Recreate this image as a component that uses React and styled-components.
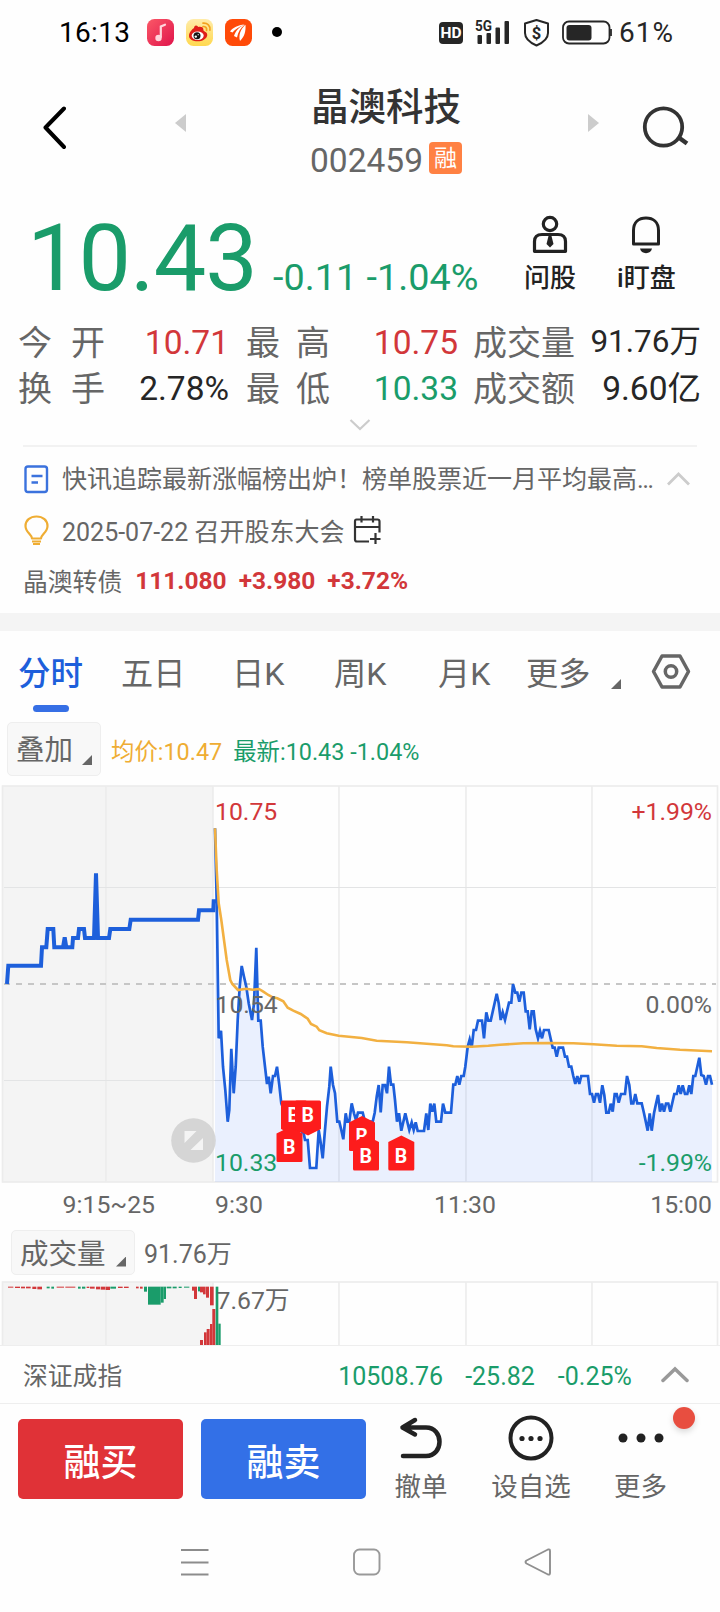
import React from 'react';
import styled, { createGlobalStyle } from 'styled-components';

const RED = '#d2373a';
const GREEN = '#1a9c6a';
const BLUE = '#1d5fdb';
const GRAY = '#666';
const DARK = '#262626';

const GlobalStyle = createGlobalStyle`
  * {
    box-sizing: border-box;
  }
  body {
    margin: 0;
    background: #fefefe;
    font-family: Roboto, 'Noto Sans CJK SC', sans-serif;
  }
  svg {
    display: block;
    flex-shrink: 0;
  }
`;

const Page = styled.div`
  width: 720px;
  height: 1612px;
  overflow: hidden;
  color: ${DARK};
`;

/* status bar */

const StatusBar = styled.div`
  display: flex;
  align-items: center;
  height: 65px;
  padding-left: 59px;
`;

const StatusText = styled.span`
  width: ${(p) => p.$width}px;
  font-size: 28px;
  line-height: 32px;
  letter-spacing: ${(p) => p.$spacing || 0.3}px;
  color: ${(p) => p.$color || '#000'};
  white-space: nowrap;
`;

const AppIcons = styled.div`
  display: flex;
  gap: 12px;
  flex: 1;
`;

const SystemIcons = styled.div`
  display: flex;
  align-items: center;
  margin-right: 7px;
`;

const HdTag = styled.span`
  width: 24px;
  height: 22px;
  margin: 1px 9px 0 0;
  border-radius: 4px;
  background: ${DARK};
  color: #fff;
  font-size: 15.5px;
  font-weight: 700;
  line-height: 22px;
  text-align: center;
`;

/* title */

const Header = styled.div`
  display: flex;
  align-items: flex-start;
  height: 117px;
  padding: 19px 31px 0 42px;
`;

const Back = styled.svg`
  margin-top: 21px;
`;

const SwitchArrow = styled.svg`
  margin: 30px 0 0 ${(p) => p.$left || 0}px;
`;

const SearchIcon = styled.svg`
  margin: 20px 0 0 42px;
`;

const TitleBlock = styled.div`
  flex: 1;
  display: flex;
  flex-direction: column;
  align-items: center;
  padding-right: 2px;
`;

const StockName = styled.div`
  font-size: 37.5px;
  font-weight: 500;
  line-height: 46px;
  color: #333;
`;

const StockCode = styled.div`
  display: flex;
  align-items: center;
  gap: 6px;
  height: 44px;
  margin-top: 9px;
  font-size: 33.5px;
  line-height: 44px;
  color: ${GRAY};
`;

const MarginTag = styled.span`
  width: 33px;
  height: 32px;
  margin-top: -6px;
  border-radius: 4px;
  background: #ff8143;
  color: #fff;
  font-size: 23px;
  line-height: 34px;
  text-align: center;
`;

/* quote */

const Quote = styled.div`
  display: flex;
  height: 138px;
  padding: 26px 0 0 27px;
`;

const Price = styled.div`
  display: flex;
  align-items: baseline;
  width: 497px;
  color: ${GREEN};
  line-height: 100px;
`;

const PriceValue = styled.span`
  width: 246px;
  font-size: 93.5px;
  letter-spacing: -1px;
`;

const PriceChange = styled.span`
  font-size: 37.8px;
  white-space: nowrap;
`;

const QuoteAction = styled.div`
  display: flex;
  flex-direction: column;
  align-items: center;
  margin-top: 6px;
  margin-right: 41px;
  font-size: 26px;
  font-weight: 500;
  line-height: 30px;
  color: #222;
  white-space: nowrap;

  span {
    margin-top: 9px;
  }
`;

const Stats = styled.div`
  display: grid;
  grid-template-columns: 87px 124px 17px 84px 128px 15px 104px 1fr;
  grid-auto-rows: 46px;
  padding: 0 19px 0 18px;
  font-size: 33.5px;
  line-height: 46px;
`;

const StatLabel = styled.div`
  display: flex;
  justify-content: space-between;
  font-size: 34px;
  color: ${GRAY};
  white-space: nowrap;
`;

const StatValue = styled.div`
  text-align: right;
  font-size: ${(p) => p.$size || 33.5}px;
  line-height: ${(p) => (p.$size ? 44 : 46)}px;
  color: ${(p) => p.$color || DARK};
  white-space: nowrap;
`;

const ExpandRow = styled.div`
  display: flex;
  justify-content: center;
  height: 35px;
  margin: 0 23px;
  padding-top: 7px;
  border-bottom: 2px solid #f2f2f2;
`;

/* news */

const News = styled.div`
  height: 166px;
  padding: 6px 24px 0;
  font-size: 25px;
  color: ${GRAY};
`;

const NewsRow = styled.div`
  display: flex;
  align-items: center;
  height: 51px;
  white-space: nowrap;
`;

const NewsText = styled.span`
  margin: ${(p) => p.$top || 0}px ${(p) => p.$right || 0}px 0 13px;
`;

const BondName = styled.span`
  margin: -2px 0 0 -1px;
  font-size: 24.8px;
`;

const Bond = styled.span`
  margin-left: ${(p) => p.$left || 12}px;
  font-size: 24.5px;
  font-weight: 700;
  color: ${RED};
`;

const Band = styled.div`
  height: 18px;
  background: #f4f4f4;
`;

/* tabs */

const Tabs = styled.div`
  display: grid;
  grid-template-columns: 103px 111px 102px 104px 88px 85px 40px 1fr;
  justify-items: start;
  height: 91px;
  padding: 23px 0 0 18px;
`;

const Tab = styled.div`
  display: flex;
  flex-direction: column;
  align-items: center;
  font-size: ${(p) => (p.$active ? 32.5 : 32.2)}px;
  font-weight: ${(p) => (p.$active ? 500 : 400)};
  line-height: 40px;
  color: ${(p) => (p.$active ? BLUE : GRAY)};

  &::after {
    content: '';
    width: 36px;
    height: 7px;
    margin-top: 11px;
    border-radius: 4px;
    background: ${(p) => (p.$active ? '#366fe5' : 'transparent')};
  }
`;

const Corner = styled.i`
  width: 10px;
  height: 10px;
  margin-top: ${(p) => p.$top || 0}px;
  background: ${GRAY};
  clip-path: polygon(100% 0, 100% 100%, 0 100%);
`;

const Toolbar = styled.div`
  display: flex;
  height: 58px;
  padding-left: 7px;
  font-size: 23.4px;
  line-height: 60px;
  white-space: nowrap;
`;

const Picker = styled.div`
  display: flex;
  justify-content: space-between;
  align-items: center;
  width: ${(p) => p.$width}px;
  height: ${(p) => p.$height}px;
  padding: 4px 8px 0 8px;
  border: 1px solid #eee;
  border-radius: 5px;
  background: #f8f8f8;
  color: ${GRAY};
  font-size: 28.5px;
  line-height: 40px;
`;

const Legend = styled.span`
  margin-left: ${(p) => p.$left}px;
  color: ${(p) => p.$color};
`;

const VolumeBar = styled.div`
  display: flex;
  height: 55px;
  padding: 5px 0 0 11px;
`;

const VolumeValue = styled.span`
  margin-left: 9px;
  font-size: 25px;
  line-height: 50px;
  color: ${GRAY};
`;

const Chart = styled.svg`
  font-family: Roboto, 'Noto Sans CJK SC', sans-serif;
  font-size: 24.8px;
`;

/* bottom */

const IndexRow = styled.div`
  display: flex;
  align-items: center;
  height: 59px;
  padding: 4px 31px 0 23px;
  border-top: 1px solid #eee;
  border-bottom: 1px solid #eee;
  font-size: 24.8px;
  line-height: 40px;
  color: ${GRAY};

  svg {
    margin: -3px 0 0 auto;
  }
`;

const IndexValue = styled.span`
  margin-left: ${(p) => p.$left}px;
  font-size: 25px;
  color: ${GREEN};
`;

const ActionBar = styled.div`
  display: flex;
  height: 116px;
  padding: 15px 0 0 18px;
`;

const TradeButton = styled.button`
  width: 165px;
  height: 80px;
  margin-right: 18px;
  padding: 1px 0 0;
  border: 0;
  border-radius: 5px;
  background: ${(p) => p.$bg};
  color: #fff;
  font-family: inherit;
  font-size: 37px;
  font-weight: 500;
`;

const ToolItem = styled.div`
  position: relative;
  display: flex;
  flex-direction: column;
  align-items: center;
  width: ${(p) => p.$width}px;
  margin-top: -5px;
  font-size: 26.5px;
  line-height: 30px;
  color: ${GRAY};

  span {
    margin-top: 10px;
  }
`;

const RedDot = styled.i`
  position: absolute;
  top: -7px;
  right: -18px;
  width: 22px;
  height: 22px;
  border-radius: 50%;
  background: #e84e40;
  box-shadow: 0 3px 6px rgba(0, 0, 0, 0.15);
`;

const SystemNav = styled.div`
  display: flex;
  align-items: center;
  justify-content: space-between;
  height: 84px;
  padding: 0 168px 0 181px;
`;

/* chart data, three units to a pixel */

const AUCTION = [
  21, 612, 25, 557, 123, 557, 126, 502, 139, 502, 143, 447, 160, 447, 163, 502, 189, 502, 194, 472,
  199, 502, 217, 502, 219, 474, 234, 474, 237, 447, 252, 447, 255, 474, 282, 474, 288, 280, 294, 474,
  327, 474, 331, 447, 388, 447, 392, 419, 594, 419, 597, 391, 640, 391, 641, 364, 650, 364,
];

const MORNING = [
  45, 145, 50, 363, 56, 775, 63, 752, 69, 860, 76, 930, 83, 1025, 88, 990, 94, 806, 101, 940, 107, 860,
  113, 720, 119, 620, 125, 558, 132, 590, 139, 620, 146, 670, 156, 720, 162, 670, 169, 503, 175, 722,
  182, 722, 188, 800, 195, 860, 201, 912, 206, 890, 212, 940, 219, 888, 225, 888, 231, 860, 238, 915,
  244, 970, 256, 1000, 270, 1030, 285, 1000, 300, 1050, 311, 1060, 315, 1080, 323, 1080, 330, 1164,
  349, 1164, 356, 1050, 361, 1080, 368, 1135, 374, 1060, 381, 980, 388, 920, 392, 860, 399, 915,
  405, 940, 412, 1025, 418, 1025, 424, 1050, 430, 1078, 437, 1000, 442, 1025, 448, 1025, 455, 970,
  462, 1000, 468, 1020, 474, 998, 488, 998, 495, 1025, 518, 1025, 524, 998, 530, 950, 536, 915,
  542, 997, 548, 915, 555, 915, 561, 940, 567, 860, 573, 914, 580, 914, 585, 960, 591, 1025, 597, 1000,
  604, 1052, 616, 1000, 622, 1025, 628, 1050, 635, 1027, 641, 1050, 647, 1027, 653, 1053, 672, 1053,
  679, 1000, 685, 1050, 691, 971, 697, 995, 703, 971, 709, 1025, 723, 1025, 729, 971, 736, 998,
  752, 998,
];

const AFTERNOON = [
  3, 998, 10, 914, 16, 914, 22, 888, 28, 914, 34, 888, 41, 888, 46, 860, 53, 800, 59, 778, 65, 802,
  71, 750, 78, 750, 84, 722, 96, 722, 102, 775, 109, 697, 115, 722, 122, 722, 140, 641, 146, 670,
  152, 720, 158, 697, 165, 720, 177, 668, 184, 668, 189, 612, 196, 638, 202, 638, 208, 665, 214, 638,
  221, 638, 227, 694, 233, 694, 239, 748, 245, 694, 251, 694, 257, 748, 264, 775, 270, 752, 276, 775,
  282, 750, 296, 750, 308, 803, 314, 803, 320, 830, 326, 803, 339, 803, 345, 830, 351, 830, 357, 860,
  364, 860, 370, 888, 376, 912, 382, 888, 388, 912, 394, 888, 414, 888, 420, 942, 426, 942, 432, 968,
  438, 942, 444, 942, 450, 968, 457, 916, 463, 945, 469, 998, 476, 998, 482, 971, 488, 995, 494, 942,
  500, 942, 506, 968, 513, 942, 525, 942, 531, 888, 538, 915, 544, 970, 550, 970, 556, 942, 562, 970,
  575, 970, 582, 1000, 593, 1052, 599, 1000, 605, 1052, 612, 1000, 618, 971, 624, 945, 630, 995,
  636, 971, 642, 995, 648, 971, 655, 971, 661, 995, 673, 942, 680, 942, 686, 916, 692, 942, 698, 916,
  705, 942, 712, 942, 718, 916, 724, 942, 730, 888, 736, 888, 748, 833, 754, 885, 761, 888, 768, 914,
  774, 888, 780, 888, 786, 914,
];

const AVERAGE_AM = [
  45, 145, 50, 270, 56, 370, 64, 420, 72, 480, 80, 540, 91, 600, 97, 612, 114, 630, 138, 626, 158, 629,
  177, 627, 190, 635, 205, 645, 218, 652, 232, 655, 250, 664, 263, 683, 280, 692, 302, 702, 323, 716,
  333, 732, 350, 740, 358, 751, 380, 760, 416, 767, 485, 774, 530, 782, 620, 787, 700, 793, 740, 796,
];

const AVERAGE_PM = [
  10, 799, 63, 800, 115, 797, 150, 794, 220, 790, 300, 789, 370, 790, 430, 793, 500, 797, 575, 799,
  620, 804, 690, 809, 786, 814,
];

const GRID_X = [106, 213, 339, 466, 592];

const toPoints = (data, left) => {
  const out = [];
  for (let i = 0; i < data.length; i += 2) {
    out.push(`${(data[i] / 3 + left).toFixed(1)},${(data[i + 1] / 3).toFixed(1)}`);
  }
  return out.join(' ');
};

const auction = toPoints(AUCTION, 0);
const price = `${toPoints(MORNING, 200)} ${toPoints(AFTERNOON, 450)}`;
const average = `${toPoints(AVERAGE_AM, 200)} ${toPoints(AVERAGE_PM, 450)}`;

// x, top, flipped
const MARKERS = [
  [281, 320.5, true],
  [295, 320.5, true],
  [276.5, 348, false],
  [349, 337, false],
  [353, 356.5, false],
  [388.3, 356.5, false],
];

// x, y, width, height, color
const BARS = [
  [24, 320, 16, 3, RED], [45, 320, 15, 4, RED], [63, 320, 12, 5, RED], [78, 320, 14, 5, RED],
  [97, 320, 12, 7, RED], [112, 320, 14, 8, RED], [140, 320, 9, 5, GREEN], [154, 320, 8, 6, GREEN],
  [170, 320, 22, 3, RED], [196, 320, 30, 3, RED], [234, 320, 8, 6, GREEN], [246, 320, 10, 6, GREEN],
  [260, 320, 8, 4, RED], [270, 320, 14, 6, RED], [288, 320, 12, 8, RED], [302, 320, 14, 9, RED],
  [317, 320, 13, 10, RED], [331, 320, 17, 6, GREEN], [354, 320, 14, 4, RED], [372, 320, 14, 4, RED],
  [408, 320, 8, 5, RED], [420, 320, 8, 6, RED], [432, 320, 9, 15, GREEN], [444, 320, 38, 54, GREEN],
  [482, 320, 9, 48, GREEN], [491, 320, 7, 37, GREEN], [500, 320, 14, 5, GREEN], [518, 320, 12, 5, GREEN],
  [536, 320, 9, 4, GREEN], [552, 320, 16, 3, GREEN], [576, 320, 6, 12, RED], [582, 320, 9, 37, RED],
  [594, 320, 6, 14, GREEN], [600, 320, 9, 17, RED], [609, 320, 8, 23, RED], [618, 320, 9, 33, RED],
  [630, 320, 11, 56, RED], [600, 480, 9, 15, RED], [612, 457, 8, 38, RED], [620, 447, 9, 48, RED],
  [630, 432, 7, 63, RED], [637, 387, 9, 108, RED], [647, 320, 8, 175, GREEN], [655, 431, 7, 64, GREEN],
];

const MusicIcon = () => (
  <svg width="27" height="27" viewBox="0 0 27 27">
    <linearGradient id="music" x1="0" y1="0" x2="1" y2="1">
      <stop offset="0" stopColor="#fb5867" />
      <stop offset="1" stopColor="#e0144b" />
    </linearGradient>
    <rect width="27" height="27" rx="7.5" fill="url(#music)" />
    <path d="M13.8 18V7.5l4.2-1.8" fill="none" stroke="#ffd5dc" strokeWidth="2.2" strokeLinecap="round" />
    <circle cx="11.5" cy="19" r="3.2" fill="#ffd5dc" />
  </svg>
);

const WeiboIcon = () => (
  <svg width="27" height="27" viewBox="0 0 27 27">
    <linearGradient id="weibo" x1="0" y1="0" x2="0" y2="1">
      <stop offset="0" stopColor="#ffecaa" />
      <stop offset="1" stopColor="#ffd84f" />
    </linearGradient>
    <rect width="27" height="27" rx="7.5" fill="url(#weibo)" />
    <path d="M3 17c0-4 3.500-7 5-8 0-1.500 1-2.500 2-2.500 1.500 0 2 1.500 2.500 1.500 2-.5 5 0 4.900 2.500 0 1 .3 1.500 1.300 2 1.800.9 2.800 2 2.500 4-.6 3.500-5 5.800-9.500 5.800C7 22.300 3 20.300 3 17z" fill="#df1e18" />
    <ellipse cx="11.700" cy="16.700" rx="6" ry="4.200" fill="#fff" />
    <circle cx="11" cy="16.700" r="3.500" fill="#141414" />
    <circle cx="9.800" cy="17.600" r="1.200" fill="#fff" />
    <circle cx="12.200" cy="15.700" r=".6" fill="#fff" />
    <path d="M17 7.500c2.500-.2 4 1.400 3.600 3.800M17 4.200c4.500-.4 7.500 2.600 6.900 7" fill="none" stroke="#f3a21f" strokeWidth="1.700" strokeLinecap="round" />
  </svg>
);

const BrokerIcon = () => (
  <svg width="27" height="27" viewBox="0 0 27 27">
    <rect width="27" height="27" rx="7.500" fill="#ff4a08" />
    <path d="M5 12.500C8 8.500 13 6 19.500 5.500 14 7.500 10 10.500 7.500 13.500zM9 17c1.500-5 5-9.500 11-11.300C15.500 9 13 13 12 18.500zM15 22c-1.600-6 .5-12 5.500-16.200.5 6.200-1 12.200-5.500 16.200z" fill="#fff" />
  </svg>
);

const PersonIcon = () => (
  <svg width="40" height="40" viewBox="0 0 40 40" fill="none" stroke="#222" strokeWidth="3.200">
    <circle cx="20" cy="10" r="6.700" />
    <path d="M12 20.500h16q7.500 0 7.500 7V37.300h-31v-9.800q0-7 7.500-7z" strokeLinejoin="round" />
    <path d="M18.500 22h3l2 8-3.500 3.500-3.500-3.500z" fill="#222" stroke="none" />
  </svg>
);

const BellIcon = () => (
  <svg width="40" height="40" viewBox="0 0 40 40" fill="none" stroke="#222" strokeWidth="3">
    <path d="M7.500 30V16.500C7.500 8 13 4 20 4s12.500 4 12.500 12.500V30z" strokeLinejoin="round" />
    <path d="M14 34.500h12c-.5 2.800-3 4.700-6 4.700s-5.500-1.900-6-4.700z" fill="#222" stroke="none" />
  </svg>
);

const PriceChart = () => (
  <Chart width="720" height="445" viewBox="0 0 720 445">
    <rect x="2.500" y="6" width="210.500" height="396" fill="#f4f4f4" />
    <g stroke="#ececec" strokeWidth="1.600" fill="none">
      <rect x="2.500" y="6" width="715" height="396" />
      {GRID_X.map((x) => (
        <path key={x} d={`M${x} 6V402`} />
      ))}
      <path d="M4 107.500H716M4 300.500H716" stroke="#e3e4e5" strokeWidth="1" />
    </g>
    <path d="M4 204H716" stroke="#c6c6c6" strokeWidth="1.800" strokeDasharray="6 6" />
    <text x="215" y="39.700" fill={RED}>10.75</text>
    <text x="712" y="39.700" fill={RED} textAnchor="end">+1.99%</text>
    <polygon points={`215,402 ${price} 712,402`} fill="#2b66ff" opacity=".095" />
    <polyline points={auction} fill="none" stroke={BLUE} strokeWidth="4" />
    <polyline points={price} fill="none" stroke={BLUE} strokeWidth="2.700" />
    <polyline points={average} fill="none" stroke="#f2b041" strokeWidth="2.600" />
    <text x="215.500" y="232.600" fill={GRAY}>10.54</text>
    <text x="712" y="232.600" fill={GRAY} textAnchor="end">0.00%</text>
    <text x="215" y="390.500" fill={GREEN}>10.33</text>
    <text x="712" y="390.500" fill={GREEN} textAnchor="end">-1.99%</text>
    {MARKERS.map(([x, y, flipped]) => (
      <g key={`${x}-${y}`} transform={`translate(${x} ${y})`} fontSize="19.500" fontWeight="700" textAnchor="middle">
        <path
          d={flipped ? 'M0 1.500q0-1.500 1.500-1.500h23q1.500 0 1.500 1.500V28.500L13 35 0 28.500z' : 'M13-1L26 5.500V32.500q0 1.500-1.500 1.500h-23Q0 34 0 32.500V5.500z'}
          fill="#fd1c1c"
        />
        <text x="12.700" y={flipped ? 21.500 : 26} fill="#fff">B</text>
      </g>
    ))}
    <circle cx="193.500" cy="360.500" r="22.300" fill="#cfcfcf" opacity=".85" />
    <path d="M184.500 351h12l-12 12zM203 358v12h-12.500z" fill="#f4f4f4" />
    <text x="62.500" y="432.500" fill={GRAY}>9:15~25</text>
    <text x="215" y="432.500" fill={GRAY}>9:30</text>
    <text x="465" y="432.500" fill={GRAY} textAnchor="middle">11:30</text>
    <text x="712" y="432.500" fill={GRAY} textAnchor="end">15:00</text>
  </Chart>
);

const VolumeChart = () => (
  <Chart width="720" height="65" viewBox="0 0 720 65">
    <rect x="2.500" y="2" width="210.500" height="70" fill="#f4f4f4" />
    <g stroke="#ececec" strokeWidth="1.600" fill="none">
      <rect x="2.500" y="2" width="715" height="70" />
      {GRID_X.map((x) => (
        <path key={x} d={`M${x} 2V65`} />
      ))}
    </g>
    {BARS.map(([x, y, w, h, color]) => (
      <rect key={`${x}-${y}`} x={x / 3} y={(y - 300) / 3} width={w / 3} height={h / 3} fill={color} />
    ))}
    <text x="216.500" y="29.300" fill={GRAY}>7.67万</text>
  </Chart>
);

const Pair = ({ text }) => (
  <StatLabel>
    {text.split('').map((char) => (
      <span key={char}>{char}</span>
    ))}
  </StatLabel>
);

const App = () => {
  return (
    <Page>
      <GlobalStyle />
      <StatusBar>
        <StatusText $width={88}>16:13</StatusText>
        <AppIcons>
          <MusicIcon />
          <WeiboIcon />
          <BrokerIcon />
          <svg width="27" height="27">
            <circle cx="13" cy="13" r="5" />
          </svg>
        </AppIcons>
        <SystemIcons>
          <HdTag>HD</HdTag>
          <svg width="44" height="30" viewBox="0 0 44 30" fill={DARK}>
            <text x="3" y="12.500" fontFamily="Roboto" fontSize="15" fontWeight="700" textLength="17" lengthAdjust="spacingAndGlyphs">5G</text>
            <rect x="5.500" y="17" width="4.500" height="9" rx="1" />
            <rect x="14.500" y="15" width="4.500" height="11" rx="1" />
            <rect x="23.500" y="9.500" width="4.500" height="16.500" rx="1" />
            <rect x="32.500" y="3" width="4.500" height="23" rx="1" />
          </svg>
          <svg width="46" height="30" viewBox="0 0 46 30" fill="none" stroke={DARK} strokeWidth="2">
            <path d="M20.500 2L32 5.500V15c0 6-4.500 9.500-11.500 12.500C13.500 24.500 9 21 9 15V5.500z" strokeLinejoin="round" />
            <text x="20.500" y="20.500" textAnchor="middle" fontFamily="Roboto" fontSize="16.500" fontWeight="700" fill={DARK} stroke="none">$</text>
          </svg>
          <svg width="50" height="30" viewBox="0 0 50 30">
            <rect x="1" y="3.500" width="46.500" height="22" rx="6" fill="none" stroke={DARK} strokeWidth="1.800" />
            <rect x="4.500" y="7" width="25" height="15.500" rx="3" fill={DARK} />
            <path d="M49 11v7" stroke={DARK} strokeWidth="1.800" />
          </svg>
        </SystemIcons>
        <StatusText $width={101} $spacing={1} $color={DARK}>61%</StatusText>
      </StatusBar>

      <Header>
        <Back width="24" height="45" viewBox="0 0 24 45" fill="none" stroke="#000" strokeWidth="4" strokeLinecap="round" strokeLinejoin="round">
          <path d="M22 3.500L3.500 22.500 22 42" />
        </Back>
        <SwitchArrow $left={109} width="11" height="18">
          <path d="M11 0v18L0 9z" fill="#ccc" />
        </SwitchArrow>
        <TitleBlock>
          <StockName>晶澳科技</StockName>
          <StockCode>
            002459<MarginTag>融</MarginTag>
          </StockCode>
        </TitleBlock>
        <SwitchArrow width="11" height="18">
          <path d="M0 0v18l11-9z" fill="#ccc" />
        </SwitchArrow>
        <SearchIcon width="48" height="46" viewBox="0 0 48 46" fill="none" stroke="#333" strokeWidth="3.800">
          <circle cx="22.500" cy="23" r="18.700" />
          <path d="M37 33l9 6.500" strokeWidth="4.500" />
        </SearchIcon>
      </Header>

      <Quote>
        <Price>
          <PriceValue>10.43</PriceValue>
          <PriceChange>-0.11 -1.04%</PriceChange>
        </Price>
        <QuoteAction>
          <PersonIcon />
          <span>问股</span>
        </QuoteAction>
        <QuoteAction>
          <BellIcon />
          <span>i盯盘</span>
        </QuoteAction>
      </Quote>
      <Stats>
        <Pair text="今开" />
        <StatValue $color={RED}>10.71</StatValue>
        <i />
        <Pair text="最高" />
        <StatValue $color={RED}>10.75</StatValue>
        <i />
        <StatLabel>成交量</StatLabel>
        <StatValue $size={31.5}>91.76万</StatValue>
        <Pair text="换手" />
        <StatValue>2.78%</StatValue>
        <i />
        <Pair text="最低" />
        <StatValue $color={GREEN}>10.33</StatValue>
        <i />
        <StatLabel>成交额</StatLabel>
        <StatValue>9.60亿</StatValue>
      </Stats>
      <ExpandRow>
        <svg width="22" height="14" fill="none" stroke="#ccc" strokeWidth="2.200">
          <path d="M1.500 1l9.500 9L20.500 1" />
        </svg>
      </ExpandRow>

      <News>
        <NewsRow>
          <svg width="25" height="30" viewBox="0 0 25 30" fill="none" stroke="#3b72dd" strokeWidth="2.400">
            <rect x="1.500" y="2.500" width="21.500" height="25.500" rx="2.500" />
            <path d="M7.500 12h11M7.500 18.500h6.500" />
          </svg>
          <NewsText $top={-3} $right={12}>快讯追踪最新涨幅榜出炉！榜单股票近一月平均最高…</NewsText>
          <svg width="26" height="14" fill="none" stroke="#ccc" strokeWidth="2.800">
            <path d="M2 12.500L12.500 2 23 12.500" />
          </svg>
        </NewsRow>
        <NewsRow>
          <svg width="25" height="30" viewBox="0 0 25 30" fill="none" stroke="#efad33" strokeWidth="2.200">
            <path d="M8 23.500c0-4-6.500-6-6.500-12.500 0-5.500 4.500-9.500 11-9.500s11 4 11 9.500c0 6.500-6.500 8.500-6.500 12.500z" strokeLinejoin="round" />
            <path d="M8 26.500h9M9 29h7" strokeWidth="1.800" />
          </svg>
          <NewsText $right={9}>2025-07-22 召开股东大会</NewsText>
          <svg width="28" height="30" viewBox="0 0 28 30" fill="none" stroke="#333" strokeWidth="2.200">
            <path d="M26.500 17.500V6.500q0-2-2-2h-21Q2 4.500 2 6.500v18q0 2 2 2h12M2 12h24.500M8.500 1v6.500M20 1v6.500M22.500 18v11M17 24h10.500" />
          </svg>
        </NewsRow>
        <NewsRow>
          <BondName>晶澳转债</BondName>
          <Bond $left={13}>111.080</Bond>
          <Bond>+3.980</Bond>
          <Bond>+3.72%</Bond>
        </NewsRow>
      </News>
      <Band />

      <Tabs>
        <Tab $active>分时</Tab>
        <Tab>五日</Tab>
        <Tab>日K</Tab>
        <Tab>周K</Tab>
        <Tab>月K</Tab>
        <Tab>更多</Tab>
        <Corner $top={25} />
        <svg width="40" height="38" viewBox="0 0 40 38" fill="none" stroke={GRAY} strokeWidth="3.500">
          <path d="M11 2h18l8.500 15.500L29 33H11L2.500 17.500z" strokeLinejoin="round" />
          <circle cx="20" cy="17.500" r="5.700" />
        </svg>
      </Tabs>
      <Toolbar>
        <Picker $width={94} $height={54}>
          叠加
          <Corner $top={18} />
        </Picker>
        <Legend $left={10} $color="#efad33">均价:10.47</Legend>
        <Legend $left={11} $color={GREEN}>最新:10.43 -1.04%</Legend>
      </Toolbar>
      <PriceChart />
      <VolumeBar>
        <Picker $width={124} $height={45}>
          成交量
          <Corner $top={14} />
        </Picker>
        <VolumeValue>91.76万</VolumeValue>
      </VolumeBar>
      <VolumeChart />

      <IndexRow>
        深证成指
        <IndexValue $left={216}>10508.76</IndexValue>
        <IndexValue $left={22}>-25.82</IndexValue>
        <IndexValue $left={23}>-0.25%</IndexValue>
        <svg width="28" height="18" fill="none" stroke="#999" strokeWidth="3.500">
          <path d="M2 14.500L14 3l12 11.500" strokeLinecap="round" />
        </svg>
      </IndexRow>
      <ActionBar>
        <TradeButton $bg="#e03237">融买</TradeButton>
        <TradeButton $bg="#3370e7">融卖</TradeButton>
        <ToolItem $width={74}>
          <svg width="48" height="48" viewBox="0 0 48 48" fill="none" stroke="#222" strokeWidth="4.500" strokeLinecap="round">
            <path d="M6 42h23c18 0 18-28.500 0-28.500H6M18 6L5.500 13.500 18 20.500" strokeLinejoin="round" />
          </svg>
          <span>撤单</span>
        </ToolItem>
        <ToolItem $width={146}>
          <svg width="48" height="48" viewBox="0 0 48 48" fill="#222">
            <circle cx="24" cy="24" r="20.500" fill="none" stroke="#222" strokeWidth="4" />
            <circle cx="15" cy="24.500" r="2.600" />
            <circle cx="24" cy="24.500" r="2.600" />
            <circle cx="33" cy="24.500" r="2.600" />
          </svg>
          <span>设自选</span>
        </ToolItem>
        <ToolItem $width={73}>
          <svg width="48" height="48" viewBox="0 0 48 48" fill="#222">
            <circle cx="6" cy="24" r="4.500" />
            <circle cx="24" cy="24" r="4.500" />
            <circle cx="42" cy="24" r="4.500" />
          </svg>
          <span>更多</span>
          <RedDot />
        </ToolItem>
      </ActionBar>

      <SystemNav>
        <svg width="28" height="28" stroke="#8c8c8c" strokeWidth="2.200">
          <path d="M0 2h27.500M0 14.500h27.500M0 26.500h27.500" />
        </svg>
        <svg width="28" height="28" fill="none" stroke="#999" strokeWidth="1.900">
          <rect x="1" y="1.500" width="25.500" height="25" rx="5.500" />
        </svg>
        <svg width="28" height="28" fill="none" stroke="#8f8f8f" strokeWidth="1.900">
          <path d="M24 1.500L2.500 12.500q-2 1.500 0 3L24 26.500q2 .5 2-1.500V3q0-2-2-1.500z" strokeLinejoin="round" />
        </svg>
      </SystemNav>
    </Page>
  );
};

export default App;
